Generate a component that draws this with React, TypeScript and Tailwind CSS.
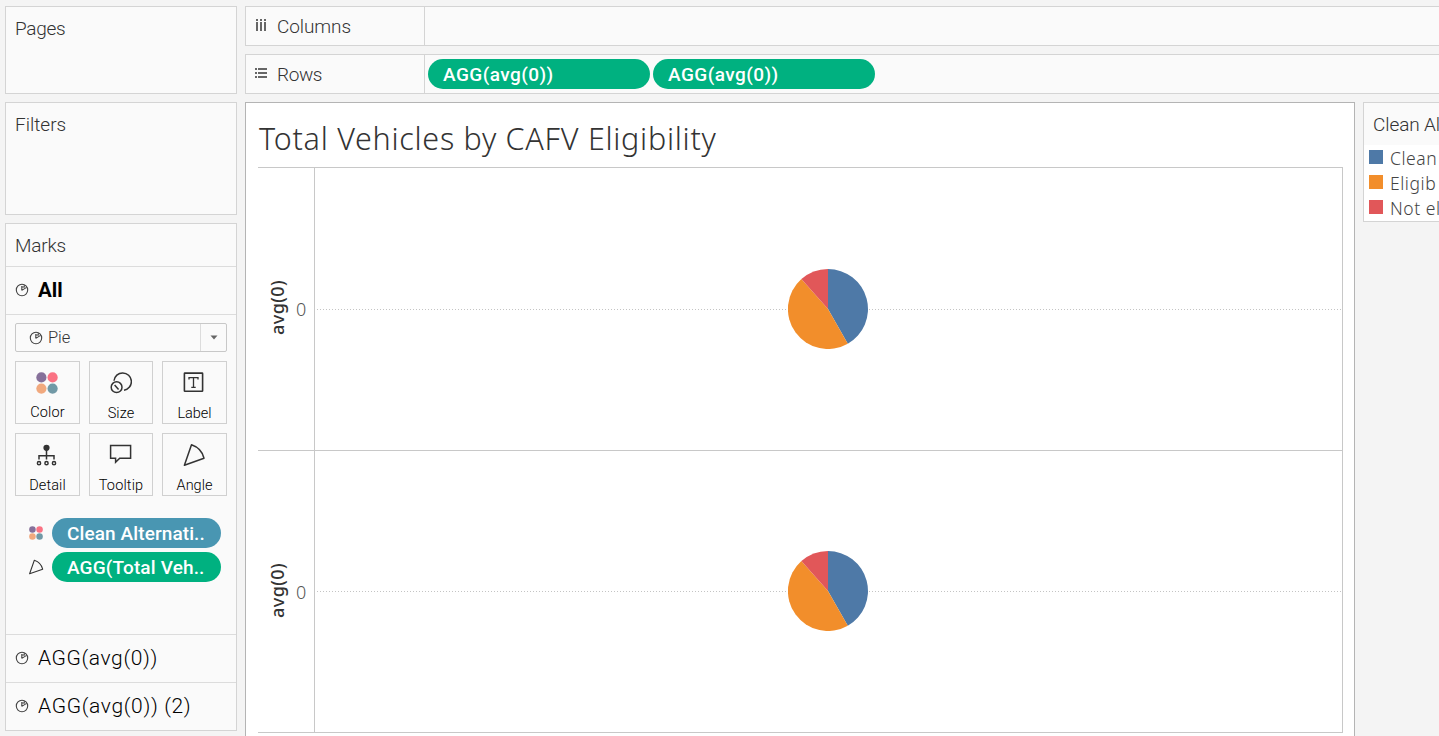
import React from "react";

const sans = "font-['Roboto','Liberation_Sans',sans-serif]";
const chartFont = "font-['Noto_Sans','Open_Sans',sans-serif]";

function PieIcon({ className = "" }: { className?: string }) {
  return (
    <svg width="14" height="14" viewBox="0 0 14 14" fill="none" stroke="#444" strokeWidth="1.1" className={className}>
      <circle cx="7" cy="7" r="5.7" />
      <path d="M6.8 7.4V3M6.8 7.4L11.6 4.4M6.8 3.8L9.2 4.2L9.4 2.2" />
    </svg>
  );
}

function ColorDots({ size }: { size: number }) {
  return (
    <svg width={size} height={size} viewBox="0 0 22 22">
      <circle cx="5.4" cy="5.4" r="5.1" fill="#86709a" />
      <circle cx="16.6" cy="5.4" r="5.1" fill="#fa7283" />
      <circle cx="5.4" cy="16.6" r="5.1" fill="#f1a97e" />
      <circle cx="16.6" cy="16.6" r="5.1" fill="#7199a6" />
    </svg>
  );
}

function AngleIcon({ size, width = 1.5 }: { size: number; width?: number }) {
  return (
    <svg width={size} height={size} viewBox="0 0 24 24" fill="none" stroke="#333" strokeWidth={width} strokeLinejoin="round">
      <path d="M2.4 22.2L9.5 1.8C16 4 20.5 9 22 15.2Z" />
    </svg>
  );
}

function SizeIcon() {
  return (
    <svg width="24" height="24" viewBox="0 0 24 24" fill="none" stroke="#333" strokeWidth="1.5">
      <path d="M6 9.8A8.7 8.7 0 1 1 16 19.2" />
      <circle cx="8.6" cy="16.2" r="5.4" />
      <path d="M6.6 13.9l4 4.6" />
    </svg>
  );
}

function LabelIcon() {
  return (
    <svg width="24" height="24" viewBox="0 0 24 24" fill="none" stroke="#333" strokeWidth="1.6">
      <rect x="2.4" y="2.1" width="18.2" height="18.2" rx="0.5" />
      <path d="M7 8.6v-2h9v2M11.5 6.6v9.7M9.3 16.3h4.4" strokeWidth="1.3" />
    </svg>
  );
}

function DetailIcon() {
  return (
    <svg width="24" height="24" viewBox="0 0 24 24" fill="none" stroke="#333" strokeWidth="1.5">
      <circle cx="11.5" cy="4.8" r="3.1" fill="#333" stroke="none" />
      <path d="M11.5 7v9.5M4 16.5v-3.7h15v3.7" />
      <circle cx="4" cy="20.2" r="1.6" />
      <circle cx="11.5" cy="20.2" r="1.6" />
      <circle cx="19" cy="20.2" r="1.6" />
    </svg>
  );
}

function TooltipIcon() {
  return (
    <svg width="24" height="24" viewBox="0 0 24 24" fill="none" stroke="#333" strokeWidth="1.5">
      <path d="M2.6 2.5h20v12.7H11.7L7.6 19.3v-4.1h-5z" />
    </svg>
  );
}

function MarkButton({ label, spacing, children }: { label: string; spacing: string; children: React.ReactNode }) {
  return (
    <button className="flex h-[63px] flex-col items-center border border-[#d0d0d0] bg-[#fafafa] pt-[9px]">
      <span className="mr-[2px] flex h-6 items-center">{children}</span>
      <span className={`mt-[9px] whitespace-nowrap text-[14.5px] leading-[20px] font-[350] text-black ${spacing}`}>{label}</span>
    </button>
  );
}

function Pie() {
  return (
    <svg width="80" height="80" viewBox="-40 -40 80 80" className="relative z-10 mr-[2px] mb-px block">
      <path d="M0 0V-40A40 40 0 0 1 19.8 34.75Z" fill="#4e79a7" />
      <path d="M0 0L19.8 34.75A40 40 0 0 1-26.6-29.9Z" fill="#f28e2b" />
      <path d="M0 0L-26.6-29.9A40 40 0 0 1 0-40Z" fill="#e15759" />
    </svg>
  );
}

function ChartRow({ className, lineTop }: { className: string; lineTop: string }) {
  return (
    <div className={`flex border-b border-[#c8c8c8] ${className}`}>
      <div className={`flex w-[56px] shrink-0 items-center ${chartFont}`}>
        <div className="flex w-[38px] items-center justify-end pr-2 pb-[3px]">
          <span className="rotate-180 whitespace-nowrap text-[18px] leading-[22px] font-medium tracking-[0.4px] text-[#333] [writing-mode:vertical-rl]">avg(0)</span>
        </div>
        <span className="text-[18px] leading-none font-light text-[#555]">0</span>
      </div>
      <div className="relative flex flex-1 items-center justify-center border-x border-[#c8c8c8]">
        <svg className={`absolute left-[2px] h-px w-[1025px] ${lineTop}`}>
          <line x1="0" y1="0.5" x2="1025" y2="0.5" stroke="#c4c4c4" strokeDasharray="1 2" />
        </svg>
        <Pie />
      </div>
    </div>
  );
}

const legend = [
  { color: "bg-[#4e79a7]", label: "Clean" },
  { color: "bg-[#f28e2b]", label: "Eligib" },
  { color: "bg-[#e15759]", label: "Not el" },
];

const card = "border border-[#d4d4d4] bg-[#fafafa]";
const heading = "text-[19px] leading-[24px] font-light text-[#333]";
const pill = "flex h-[30px] items-center rounded-full pt-[2px] pl-[15px] text-[19px] leading-[28px] font-medium whitespace-nowrap text-white";

export default function App() {
  return (
    <div className={`flex h-[736px] w-full gap-2 overflow-hidden bg-[#f4f4f4] pt-[6px] pl-[5px] ${sans}`}>
      <aside className="flex w-[232px] shrink-0 flex-col gap-2">
        <section className={`h-[88px] ${card} px-[9px] pt-[10px]`}>
          <h2 className={`${heading} tracking-[-0.3px]`}>Pages</h2>
        </section>
        <section className={`h-[113px] ${card} px-[9px] pt-[10px]`}>
          <h2 className={heading}>Filters</h2>
        </section>
        <section className={`flex h-[508px] flex-col ${card}`}>
          <h2 className={`h-[43px] border-b border-[#dcdcdc] px-[9px] pt-[10px] tracking-[-0.2px] ${heading}`}>Marks</h2>
          <div className="flex h-12 items-center gap-[9px] border-b border-[#dcdcdc] pb-[2px] pl-[9px]">
            <PieIcon />
            <span className="pt-[2px] text-[20.5px] font-bold text-black">All</span>
          </div>
          <div className="flex h-[320px] flex-col border-b border-[#dcdcdc] px-[9px] pt-2">
            <div className="flex h-[29px] shrink-0 items-center rounded-[2px] border border-[#c8c8c8]">
              <PieIcon className="ml-[13px]" />
              <span className="ml-[5px] flex-1 pt-[1px] text-[16.5px] font-light tracking-[-0.1px] text-[#333]">Pie</span>
              <span className="flex h-full w-[26px] items-center justify-center border-l border-[#dcdcdc]">
                <svg width="8" height="5" viewBox="0 0 8 5"><path d="M0.5 0.5h7L4 4.5z" fill="#666" /></svg>
              </span>
            </div>
            <div className="mt-[9px] grid grid-cols-[65px_64px_65px] gap-x-[9px] gap-y-[9px]">
              <MarkButton label="Color" spacing="tracking-[0.1px]"><ColorDots size={22} /></MarkButton>
              <MarkButton label="Size" spacing="tracking-[0.1px]"><SizeIcon /></MarkButton>
              <MarkButton label="Label" spacing="tracking-normal"><LabelIcon /></MarkButton>
              <MarkButton label="Detail" spacing="tracking-[0.1px]"><DetailIcon /></MarkButton>
              <MarkButton label="Tooltip" spacing="tracking-[0.15px]"><TooltipIcon /></MarkButton>
              <MarkButton label="Angle" spacing="tracking-normal"><AngleIcon size={24} /></MarkButton>
            </div>
            <div className="mt-[22px] flex flex-col gap-1 pl-[13px]">
              <div className="flex items-center gap-2">
                <span className="flex w-4 pl-px"><ColorDots size={14} /></span>
                <span className={`${pill} w-[169px] bg-[#4996b2] tracking-[0.1px]`}>Clean Alternati..</span>
              </div>
              <div className="flex items-center gap-2">
                <span className="flex w-4 justify-center"><AngleIcon size={16} width={1.6} /></span>
                <span className={`${pill} w-[169px] bg-[#00b180] tracking-[0.15px]`}>AGG(Total Veh..</span>
              </div>
            </div>
          </div>
          <div className="flex h-12 items-center gap-[9px] border-b border-[#dcdcdc] pb-[2px] pl-[9px]">
            <PieIcon />
            <span className="pt-[2px] text-[21px] font-light tracking-[0.6px] text-black">AGG(avg(0))</span>
          </div>
          <div className="flex flex-1 items-center gap-[9px] pb-[2px] pl-[9px]">
            <PieIcon />
            <span className="pt-[2px] text-[21px] font-light tracking-[0.65px] text-black">AGG(avg(0)) (2)</span>
          </div>
        </section>
      </aside>

      <main className="flex min-w-0 flex-1 flex-col gap-2">
        <div className={`flex h-10 shrink-0 border-r-0 ${card}`}>
          <div className="flex w-[179px] items-center border-r border-[#d4d4d4] pl-[9px]">
            <svg width="14" height="14" viewBox="0 0 14 14" fill="#666">
              <path d="M1 0h2v2H1zM5 0h2v2H5zM9 0h2v2H9zM1 3h2v9H1zM5 3h2v9H5zM9 3h2v9H9z" />
            </svg>
            <span className={`ml-2 pt-[2px] tracking-[-0.1px] ${heading}`}>Columns</span>
          </div>
        </div>
        <div className={`flex h-10 shrink-0 border-r-0 ${card}`}>
          <div className="flex w-[179px] items-center border-r border-[#d4d4d4] pl-[9px]">
            <svg width="14" height="14" viewBox="0 0 14 14" fill="#666">
              <path d="M0 1h2v2H0zM0 5h2v2H0zM0 9h2v2H0zM3 1h9v2H3zM3 5h9v2H3zM3 9h9v2H3z" />
            </svg>
            <span className={`ml-2 pt-[2px] tracking-[-0.4px] ${heading}`}>Rows</span>
          </div>
          <div className="flex items-center gap-[3px] pl-[3px]">
            <span className={`${pill} w-[222px] bg-[#00b180] tracking-[0.45px]`}>AGG(avg(0))</span>
            <span className={`${pill} w-[222px] bg-[#00b180] tracking-[0.45px]`}>AGG(avg(0))</span>
          </div>
        </div>

        <div className="flex min-h-0 flex-1 gap-2">
          <section className="flex w-[1110px] shrink-0 flex-col border border-b-0 border-[#b4b4b4] bg-white pl-3">
            <h1 className={`h-16 pt-[15px] pl-[1px] text-[30.5px] leading-[40px] font-light tracking-[0.72px] text-[#333] ${chartFont}`}>Total Vehicles by CAFV Eligibility</h1>
            <div className="flex w-[1085px] flex-col border-t border-[#c8c8c8]">
              <ChartRow className="h-[283px]" lineTop="top-[141px]" />
              <ChartRow className="h-[282px]" lineTop="top-[140px]" />
            </div>
          </section>
          <section className="flex h-[120px] min-w-0 flex-1 flex-col overflow-hidden border border-r-0 border-[#d4d4d4] bg-white">
            <h2 className={`h-[42px] bg-[#fafafa] pt-[10px] pl-[9px] tracking-[-0.1px] whitespace-nowrap ${heading}`}>Clean Al</h2>
            <ul className="flex flex-col">
              {legend.map((item) => (
                <li key={item.label} className="flex h-[25px] items-center pl-[5px]">
                  <span className={`mb-[2px] size-[14px] shrink-0 ${item.color}`} />
                  <span className={`ml-[7px] pt-px text-[17.5px] leading-[24px] font-light tracking-[0.55px] whitespace-nowrap text-[#444] ${chartFont}`}>{item.label}</span>
                </li>
              ))}
            </ul>
          </section>
        </div>
      </main>
    </div>
  );
}
